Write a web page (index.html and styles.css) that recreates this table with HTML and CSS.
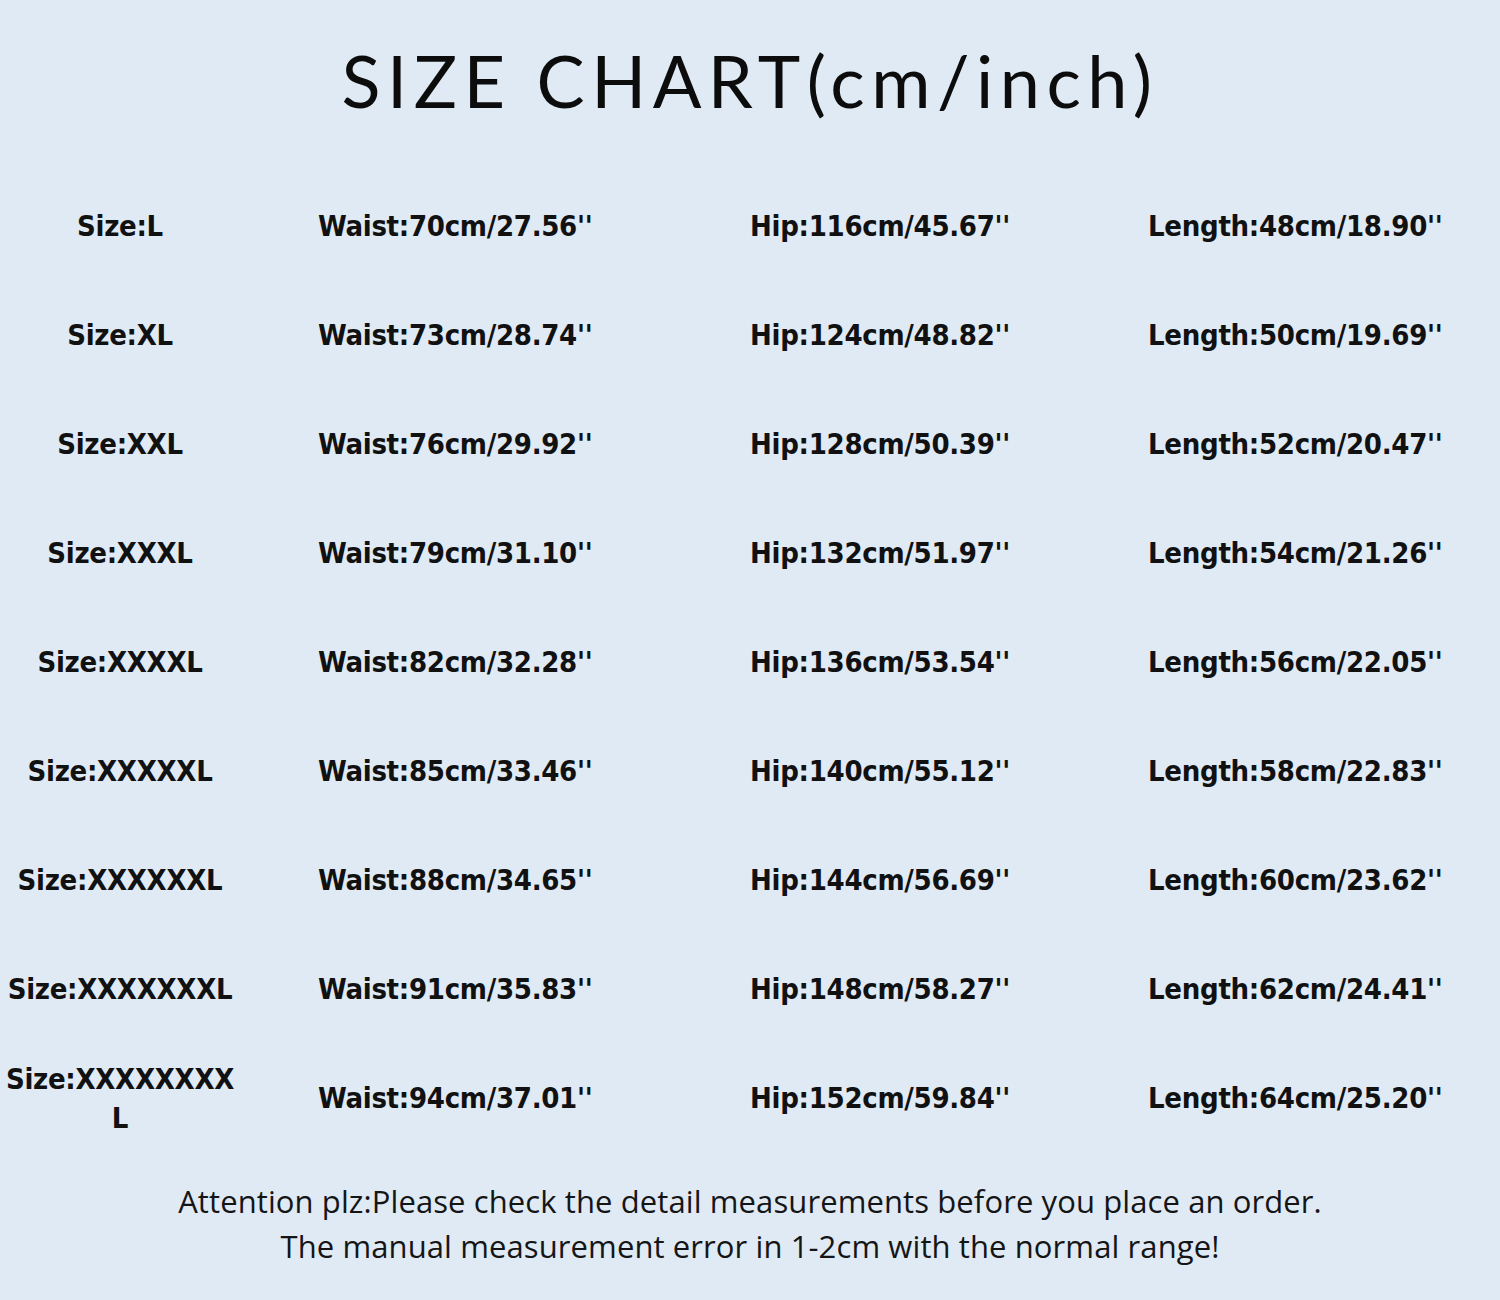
FILE: index.html
```html
<!DOCTYPE html>
<html>
<head>
<meta charset="utf-8">
<link rel="stylesheet" href="styles.css">
</head>
<body>
<div class="page">
  <h1 class="title">SIZE CHART(cm/inch)</h1>
  <div class="chart">
    <div class="row"><div class="size">Size:L</div><div class="cell">Waist:70cm/27.56''</div><div class="cell">Hip:116cm/45.67''</div><div class="cell">Length:48cm/18.90''</div></div>
    <div class="row"><div class="size">Size:XL</div><div class="cell">Waist:73cm/28.74''</div><div class="cell">Hip:124cm/48.82''</div><div class="cell">Length:50cm/19.69''</div></div>
    <div class="row"><div class="size">Size:XXL</div><div class="cell">Waist:76cm/29.92''</div><div class="cell">Hip:128cm/50.39''</div><div class="cell">Length:52cm/20.47''</div></div>
    <div class="row"><div class="size">Size:XXXL</div><div class="cell">Waist:79cm/31.10''</div><div class="cell">Hip:132cm/51.97''</div><div class="cell">Length:54cm/21.26''</div></div>
    <div class="row"><div class="size">Size:XXXXL</div><div class="cell">Waist:82cm/32.28''</div><div class="cell">Hip:136cm/53.54''</div><div class="cell">Length:56cm/22.05''</div></div>
    <div class="row"><div class="size">Size:XXXXXL</div><div class="cell">Waist:85cm/33.46''</div><div class="cell">Hip:140cm/55.12''</div><div class="cell">Length:58cm/22.83''</div></div>
    <div class="row"><div class="size">Size:XXXXXXL</div><div class="cell">Waist:88cm/34.65''</div><div class="cell">Hip:144cm/56.69''</div><div class="cell">Length:60cm/23.62''</div></div>
    <div class="row"><div class="size">Size:XXXXXXXL</div><div class="cell">Waist:91cm/35.83''</div><div class="cell">Hip:148cm/58.27''</div><div class="cell">Length:62cm/24.41''</div></div>
    <div class="row"><div class="size">Size:XXXXXXXX<br>L</div><div class="cell">Waist:94cm/37.01''</div><div class="cell">Hip:152cm/59.84''</div><div class="cell">Length:64cm/25.20''</div></div>
  </div>
  <div class="note">
    <p>Attention plz:Please check the detail measurements before you place an order.</p>
    <p>The manual measurement error in 1-2cm with the normal range!</p>
  </div>
</div>
</body>
</html>
```

FILE: styles.css
```css
html, body {
  margin: 0;
  padding: 0;
  background: #dfeaf5;
}
.page {
  width: 1500px;
  height: 1300px;
  background: #dfeaf5;
  color: #111;
  overflow: hidden;
}
.title {
  margin: 0;
  padding-top: 36px;
  height: 136px;
  box-sizing: border-box;
  text-align: center;
  font-family: "Lato", sans-serif;
  font-weight: 400;
  font-size: 72px;
  line-height: 88px;
  letter-spacing: 6.5px;
  color: #0c0c0c;
}
.chart {
  padding-top: 36px;
}
.row {
  display: grid;
  grid-template-columns: 318px 432px 398px 1fr;
  height: 109px;
  align-items: center;
}
.size {
  width: 240px;
  text-align: center;
  font-family: "DejaVu Sans Condensed", "DejaVu Sans", sans-serif;
  font-weight: bold;
  font-size: 29px;
  line-height: 39px;
  letter-spacing: -0.3px;
}
.cell {
  font-family: "DejaVu Sans Condensed", "DejaVu Sans", sans-serif;
  font-weight: bold;
  font-size: 29px;
  line-height: 39px;
  letter-spacing: -0.3px;
  white-space: nowrap;
}
.note {
  padding-top: 26px;
  text-align: center;
  font-family: "Open Sans", sans-serif;
  font-size: 31px;
  line-height: 45px;
  letter-spacing: 0.1px;
  color: #151515;
}
.note p {
  margin: 0;
}
```
